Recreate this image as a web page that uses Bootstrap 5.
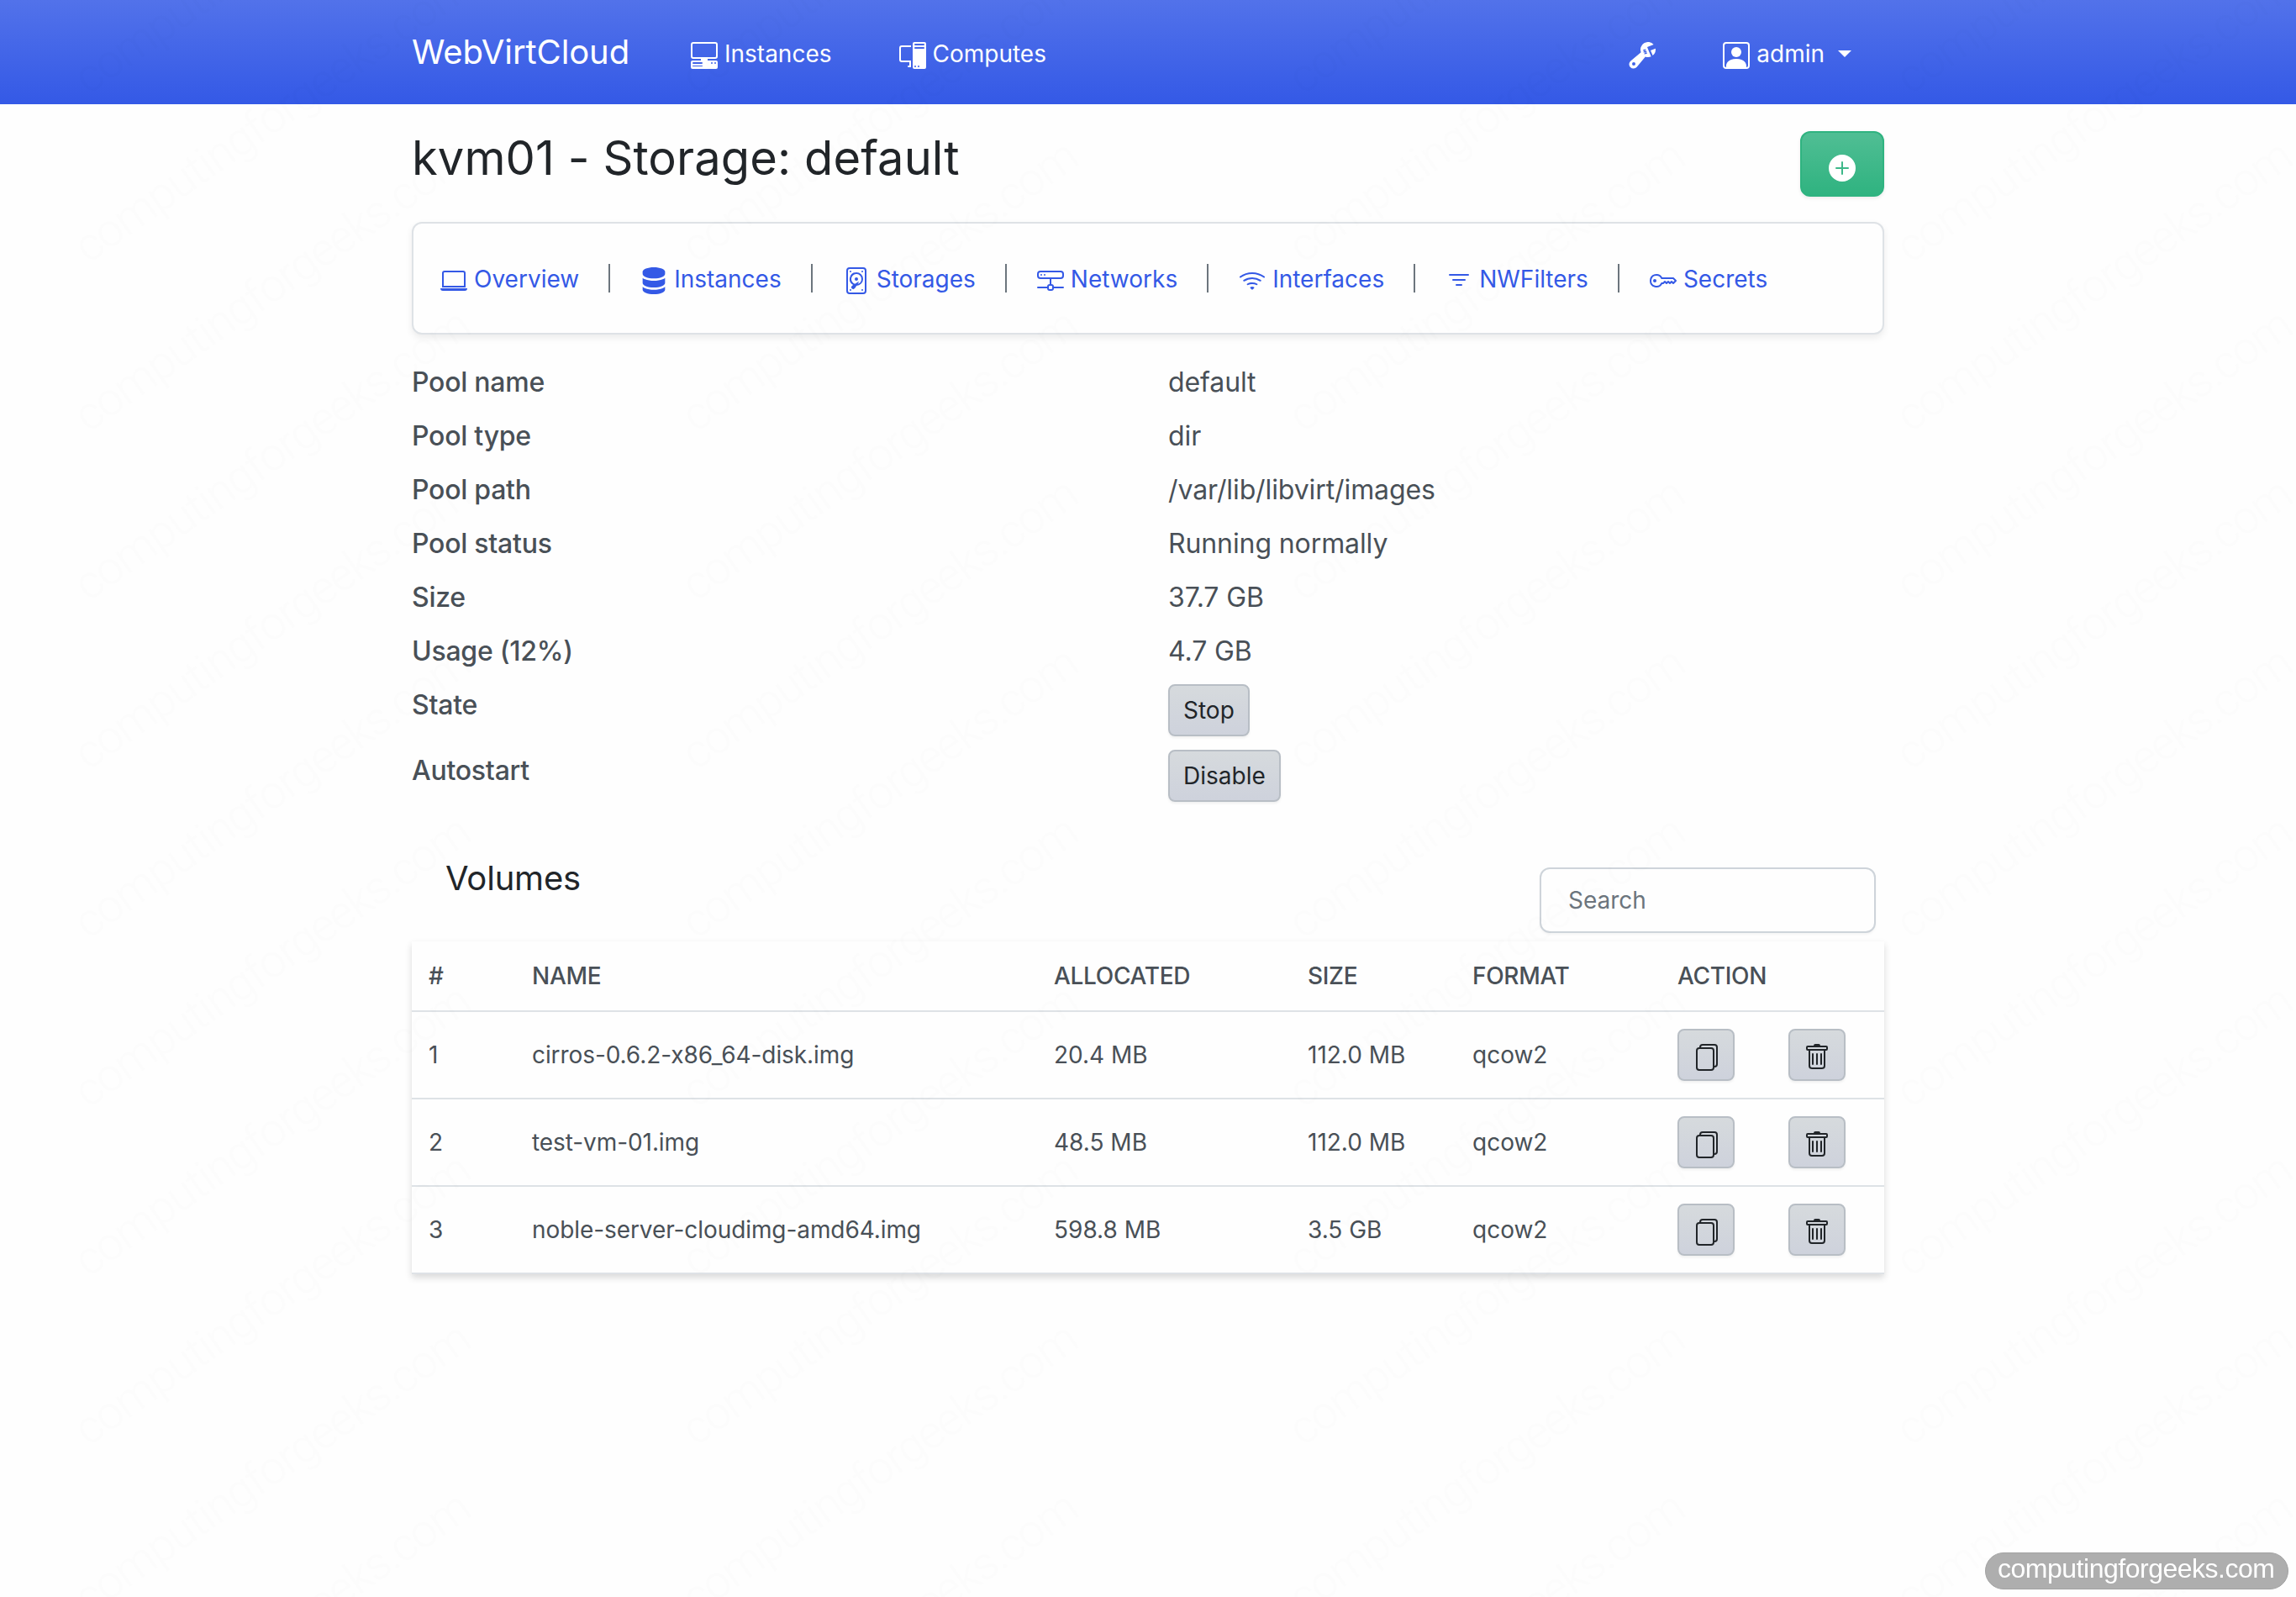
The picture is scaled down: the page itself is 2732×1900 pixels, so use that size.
<!DOCTYPE html>
<html lang="en">
<head>
<meta charset="utf-8">
<meta name="viewport" content="width=device-width, initial-scale=1">
<title>WebVirtCloud - Storage: default</title>
<link href="https://cdn.jsdelivr.net/npm/bootstrap@5.3.0/dist/css/bootstrap.min.css" rel="stylesheet">
<style>
body{font-family:Inter,"Liberation Sans",sans-serif;font-size:28px;line-height:1.5;color:#495057;background:#fefefe;height:1900px;overflow:hidden}
.page-wrap{width:1752px;margin:0 auto;padding:0}
.topbar{height:124px;background:linear-gradient(180deg,#5272ea,#3459e6)}
.topbar a{color:#fff;text-decoration:none;white-space:nowrap}
.topbar .brand{font-size:40px;line-height:60px;margin-top:-1px;width:332px;letter-spacing:-.1px}
.ico{width:32px;height:32px;fill:currentColor;flex:none;display:block}
.navitem{gap:8px;height:43px;margin-top:4px}
.navitem + .navitem{margin-left:80px}
.navitem .ico{margin-top:4px}
.navitem.user{margin-right:39px}
.caret{border-top:8px solid #fff;border-left:8px solid transparent;border-right:8px solid transparent;margin-left:8px}
.title-row{height:140px;padding-top:32px}
.title-row h2{font-size:56px;line-height:64px;font-weight:400;color:#212529;margin:0;letter-spacing:.1px}
.add-btn{width:100px;height:78px;border-radius:12px;border:2px solid #2fb380;background:linear-gradient(180deg,#50be94,#2fb380);color:#fff;padding:0;box-shadow:0 2px 4px rgba(0,0,0,.08)}
.add-btn .ico{margin:10px auto 0}
.tabs-card{height:134px;border:2px solid #dee2e6;border-radius:12px;background:#fefefe;box-shadow:0 4px 8px rgba(0,0,0,.075);padding-left:32px}
.tabs-card a{color:#3459e6;text-decoration:none;display:flex;align-items:center;gap:8px;white-space:nowrap;height:43px;padding-top:1px}
.tabs-card .ico{margin-top:5px}
.tabs-card .sep{width:2px;height:34px;background:#6c757d;margin:0 36px 0 35px}
.pool{padding-top:24px;font-size:32px;line-height:48px}
.pool dl{margin:0}
.pool .prow{padding:8px 0}
.pool dt{width:900px;font-weight:500;letter-spacing:-.25px}
.pool dd{margin:0}
.pool dt,.pool .txt{height:48px;padding-top:1px}
.pool .txt{letter-spacing:-.1px}
.grey-btn{display:flex;align-items:center;justify-content:center;height:62px;border:2px solid #b8bec5;border-radius:8px;background:linear-gradient(180deg,#d6dadd,#ced2dc);color:#212529;font-size:28px;line-height:40px;padding:0 16px;box-shadow:0 2px 3px rgba(0,0,0,.06)}
.grey-btn .ico{margin-top:6px}
.vol-head{height:158px;padding:53px 10px 0 40px}
.vol-head h3{font-size:40px;line-height:60px;font-weight:400;color:#212529;margin:0;letter-spacing:-.2px}
.search-box{width:400px;height:78px;margin-top:17px;border:2px solid #ced4da;border-radius:12px;padding:0 32px;font-size:28px;color:#6c757d;box-shadow:0 2px 3px rgba(0,0,0,.04);background:#fefefe}
.search-box::placeholder{color:#6c757d;opacity:1}
.vol-table{width:1752px;table-layout:fixed;margin:0;background:#fefefe;box-shadow:0 4px 8px rgba(0,0,0,.15);border-collapse:separate;border-spacing:0}
.vol-table th,.vol-table td{padding:0 20px;border-bottom:2px solid #dee2e6;vertical-align:middle;white-space:nowrap}
.vol-table th{height:84px;font-weight:500;letter-spacing:-.3px}
.vol-table td{height:104px}
.vol-table td:nth-child(2){letter-spacing:-.08px}
.wm{position:fixed;inset:0;pointer-events:none}
.site-tag{position:absolute;left:2362px;top:1847px;width:361px;height:44px;border-radius:22px;background:#aeaeae;border:1px solid #a2a2a2}
.site-tag text{font-family:"Liberation Sans",sans-serif;font-size:32px;fill:#fff}
</style>
<script src="https://cdn.jsdelivr.net/npm/bootstrap@5.3.0/dist/js/bootstrap.bundle.min.js"></script>
</head>
<body>
<svg width="0" height="0" class="position-absolute" aria-hidden="true">
<symbol id="i-pch" viewBox="0 0 16 16"><path d="M1.5 0A1.5 1.5 0 0 0 0 1.5v7A1.5 1.5 0 0 0 1.5 10H6v1H1a1 1 0 0 0-1 1v3a1 1 0 0 0 1 1h14a1 1 0 0 0 1-1v-3a1 1 0 0 0-1-1h-5v-1h4.5A1.5 1.5 0 0 0 16 8.5v-7A1.5 1.5 0 0 0 14.5 0h-13Zm0 1h13a.5.5 0 0 1 .5.5v7a.5.5 0 0 1-.5.5h-13a.5.5 0 0 1-.5-.5v-7a.5.5 0 0 1 .5-.5ZM12 12.5a.5.5 0 1 1 1 0 .5.5 0 0 1-1 0Zm2 0a.5.5 0 1 1 1 0 .5.5 0 0 1-1 0ZM1.5 12h5a.5.5 0 0 1 0 1h-5a.5.5 0 0 1 0-1ZM1 14.25a.25.25 0 0 1 .25-.25h5.5a.25.25 0 1 1 0 .5h-5.5a.25.25 0 0 1-.25-.25Z"/></symbol>
<symbol id="i-pc" viewBox="0 0 16 16"><path d="M8 1a1 1 0 0 1 1-1h6a1 1 0 0 1 1 1v14a1 1 0 0 1-1 1H9a1 1 0 0 1-1-1V1Zm1 13.5a.5.5 0 1 0 1 0 .5.5 0 0 0-1 0Zm2 0a.5.5 0 1 0 1 0 .5.5 0 0 0-1 0ZM9.5 1a.5.5 0 0 0 0 1h5a.5.5 0 0 0 0-1h-5ZM9 3.5a.5.5 0 0 0 .5.5h5a.5.5 0 0 0 0-1h-5a.5.5 0 0 0-.5.5ZM1.5 2A1.5 1.5 0 0 0 0 3.5v7A1.5 1.5 0 0 0 1.5 12H6v2h-.5a.5.5 0 0 0 0 1H7v-4H1.5a.5.5 0 0 1-.5-.5v-7a.5.5 0 0 1 .5-.5H7V2H1.5Z"/></symbol>
<symbol id="i-wrench" viewBox="0 0 16 16"><path d="M16 4.5a4.492 4.492 0 0 1-1.703 3.526L13 5l2.959-1.11c.027.2.041.403.041.61Z"/><path d="M11.5 9c.653 0 1.273-.139 1.833-.39L12 5.5 11 3l3.826-1.53A4.5 4.5 0 0 0 7.29 6.092l-6.116 5.096a2.583 2.583 0 1 0 3.638 3.638L9.908 8.71A4.49 4.49 0 0 0 11.5 9Zm-1.292-4.361-.596.893.809-.27a.25.25 0 0 1 .287.377l-.596.893.809-.27.158.475-1.5.5a.25.25 0 0 1-.287-.376l.596-.893-.809.27a.25.25 0 0 1-.287-.377l.596-.893-.809.27-.158-.475 1.5-.5a.25.25 0 0 1 .287.376ZM3 14a1 1 0 1 1 0-2 1 1 0 0 1 0 2Z"/></symbol>
<symbol id="i-person" viewBox="0 0 16 16"><path d="M11 6a3 3 0 1 1-6 0 3 3 0 0 1 6 0z"/><path d="M2 0a2 2 0 0 0-2 2v12a2 2 0 0 0 2 2h12a2 2 0 0 0 2-2V2a2 2 0 0 0-2-2H2zm12 1a1 1 0 0 1 1 1v12a1 1 0 0 1-1 1v-1c0-1-1-4-6-4s-6 3-6 4v1a1 1 0 0 1-1-1V2a1 1 0 0 1 1-1h12z"/></symbol>
<symbol id="i-plus" viewBox="0 0 16 16"><path d="M16 8A8 8 0 1 1 0 8a8 8 0 0 1 16 0zM8.5 4.5a.5.5 0 0 0-1 0v3h-3a.5.5 0 0 0 0 1h3v3a.5.5 0 0 0 1 0v-3h3a.5.5 0 0 0 0-1h-3v-3z"/></symbol>
<symbol id="i-laptop" viewBox="0 0 16 16"><path d="M13.5 3a.5.5 0 0 1 .5.5V11H2V3.5a.5.5 0 0 1 .5-.5h11zm-11-1A1.5 1.5 0 0 0 1 3.5V12h14V3.5A1.5 1.5 0 0 0 13.5 2h-11zM0 12.5h16a1.5 1.5 0 0 1-1.5 1.5h-13A1.5 1.5 0 0 1 0 12.5z"/></symbol>
<symbol id="i-server" viewBox="0 0 16 16"><path d="M1.333 2.667C1.333 1.194 4.318 0 8 0s6.667 1.194 6.667 2.667V4c0 1.473-2.985 2.667-6.667 2.667S1.333 5.473 1.333 4V2.667z"/><path d="M1.333 6.334v3C1.333 10.805 4.318 12 8 12s6.667-1.194 6.667-2.667V6.334a6.51 6.51 0 0 1-1.458.79C11.81 7.684 9.967 8 8 8c-1.966 0-3.809-.317-5.208-.876a6.508 6.508 0 0 1-1.458-.79z"/><path d="M14.667 11.668a6.51 6.51 0 0 1-1.458.789c-1.4.56-3.242.876-5.21.876-1.966 0-3.809-.316-5.208-.876a6.51 6.51 0 0 1-1.458-.79v1.666C1.333 14.806 4.318 16 8 16s6.667-1.194 6.667-2.667v-1.665z"/></symbol>
<symbol id="i-hdd" viewBox="0 0 16 16"><path d="M12 2.5a.5.5 0 1 1-1 0 .5.5 0 0 1 1 0Zm0 11a.5.5 0 1 1-1 0 .5.5 0 0 1 1 0Zm-7.5.5a.5.5 0 1 0 0-1 .5.5 0 0 0 0 1ZM5 2.5a.5.5 0 1 1-1 0 .5.5 0 0 1 1 0ZM8 8a1 1 0 1 0 0-2 1 1 0 0 0 0 2Z"/><path d="M12 7a4 4 0 0 1-3.937 4c-.537.813-1.02 1.515-1.181 1.677a1.102 1.102 0 0 1-1.56-1.559c.1-.098.396-.314.795-.588A4 4 0 0 1 8 3a4 4 0 0 1 4 4Zm-1 0a3 3 0 1 0-3.891 2.865c.667-.44 1.396-.91 1.955-1.268.224-.144.483.115.34.34l-.62.96A3.001 3.001 0 0 0 11 7Z"/><path d="M2 2a2 2 0 0 1 2-2h8a2 2 0 0 1 2 2v12a2 2 0 0 1-2 2H4a2 2 0 0 1-2-2V2Zm2-1a1 1 0 0 0-1 1v12a1 1 0 0 0 1 1h8a1 1 0 0 0 1-1V2a1 1 0 0 0-1-1H4Z"/></symbol>
<symbol id="i-net" viewBox="0 0 16 16"><path d="M4.5 5a.5.5 0 1 0 0-1 .5.5 0 0 0 0 1zM3 4.5a.5.5 0 1 1-1 0 .5.5 0 0 1 1 0z"/><path d="M0 4a2 2 0 0 1 2-2h12a2 2 0 0 1 2 2v1a2 2 0 0 1-2 2H8.5v3a1.5 1.5 0 0 1 1.5 1.5h5.5a.5.5 0 0 1 0 1H10A1.5 1.5 0 0 1 8.5 14h-1A1.5 1.5 0 0 1 6 12.5H.5a.5.5 0 0 1 0-1H6A1.5 1.5 0 0 1 7.5 10V7H2a2 2 0 0 1-2-2V4zm1 0v1a1 1 0 0 0 1 1h12a1 1 0 0 0 1-1V4a1 1 0 0 0-1-1H2a1 1 0 0 0-1 1zm6 7.5v1a.5.5 0 0 0 .5.5h1a.5.5 0 0 0 .5-.5v-1a.5.5 0 0 0-.5-.5h-1a.5.5 0 0 0-.5.5z"/></symbol>
<symbol id="i-wifi" viewBox="0 0 16 16"><path d="M15.384 6.115a.485.485 0 0 0-.047-.736A12.444 12.444 0 0 0 8 3C5.259 3 2.723 3.882.663 5.379a.485.485 0 0 0-.048.736.518.518 0 0 0 .668.05A11.448 11.448 0 0 1 8 4c2.507 0 4.827.802 6.716 2.164.205.148.49.13.668-.049z"/><path d="M13.229 8.271a.482.482 0 0 0-.063-.745A9.455 9.455 0 0 0 8 6c-1.905 0-3.68.56-5.166 1.526a.48.48 0 0 0-.063.745.525.525 0 0 0 .652.065A8.46 8.46 0 0 1 8 7a8.46 8.46 0 0 1 4.576 1.336c.206.132.48.108.653-.065zm-2.183 2.183c.226-.226.185-.605-.1-.75A6.473 6.473 0 0 0 8 9c-1.06 0-2.062.254-2.946.704-.285.145-.326.524-.1.75l.015.015c.16.16.407.19.611.09A5.478 5.478 0 0 1 8 10c.868 0 1.69.201 2.42.56.203.1.45.07.61-.091l.016-.015zM9.06 12.44c.196-.196.198-.52-.04-.66A1.99 1.99 0 0 0 8 11.5a1.99 1.99 0 0 0-1.02.28c-.238.14-.236.464-.04.66l.706.706a.5.5 0 0 0 .707 0l.707-.707z"/></symbol>
<symbol id="i-filter" viewBox="0 0 16 16"><path d="M6 10.5a.5.5 0 0 1 .5-.5h3a.5.5 0 0 1 0 1h-3a.5.5 0 0 1-.5-.5zm-2-3a.5.5 0 0 1 .5-.5h7a.5.5 0 0 1 0 1h-7a.5.5 0 0 1-.5-.5zm-2-3a.5.5 0 0 1 .5-.5h11a.5.5 0 0 1 0 1h-11a.5.5 0 0 1-.5-.5z"/></symbol>
<symbol id="i-key" viewBox="0 0 16 16"><path d="M0 8a4 4 0 0 1 7.465-2H14a.5.5 0 0 1 .354.146l1.5 1.5a.5.5 0 0 1 0 .708l-1.5 1.5a.5.5 0 0 1-.708 0L13 9.207l-.646.647a.5.5 0 0 1-.708 0L11 9.207l-.646.647a.5.5 0 0 1-.708 0L9 9.207l-.646.647A.5.5 0 0 1 8 10h-.535A4 4 0 0 1 0 8zm4-3a3 3 0 1 0 2.712 4.285A.5.5 0 0 1 7.163 9h.63l.853-.854a.5.5 0 0 1 .708 0l.646.647.646-.647a.5.5 0 0 1 .708 0l.646.647.646-.647a.5.5 0 0 1 .708 0l.646.647.793-.793-1-1h-6.63a.5.5 0 0 1-.451-.285A3 3 0 0 0 4 5z"/><path d="M4 8a1 1 0 1 1-2 0 1 1 0 0 1 2 0z"/></symbol>
<symbol id="i-files" viewBox="0 0 16 16"><path d="M13 0H6a2 2 0 0 0-2 2 2 2 0 0 0-2 2v10a2 2 0 0 0 2 2h7a2 2 0 0 0 2-2 2 2 0 0 0 2-2V2a2 2 0 0 0-2-2zm0 13V4a2 2 0 0 0-2-2H5a1 1 0 0 1 1-1h7a1 1 0 0 1 1 1v10a1 1 0 0 1-1 1zM3 4a1 1 0 0 1 1-1h7a1 1 0 0 1 1 1v10a1 1 0 0 1-1 1H4a1 1 0 0 1-1-1V4z"/></symbol>
<symbol id="i-trash" viewBox="0 0 16 16"><path d="M5.5 5.5A.5.5 0 0 1 6 6v6a.5.5 0 0 1-1 0V6a.5.5 0 0 1 .5-.5Zm2.5 0a.5.5 0 0 1 .5.5v6a.5.5 0 0 1-1 0V6a.5.5 0 0 1 .5-.5Zm3 .5a.5.5 0 0 0-1 0v6a.5.5 0 0 0 1 0V6Z"/><path d="M14.5 3a1 1 0 0 1-1 1H13v9a2 2 0 0 1-2 2H5a2 2 0 0 1-2-2V4h-.5a1 1 0 0 1-1-1V2a1 1 0 0 1 1-1H6a1 1 0 0 1 1-1h2a1 1 0 0 1 1 1h3.5a1 1 0 0 1 1 1v1ZM4.118 4 4 4.059V13a1 1 0 0 0 1 1h6a1 1 0 0 0 1-1V4.059L11.882 4H4.118ZM2.5 3h11V2h-11v1Z"/></symbol>
</svg>

<nav class="topbar">
  <div class="page-wrap h-100 d-flex align-items-center">
    <a class="brand" href="#">WebVirtCloud</a>
    <a class="navitem d-flex align-items-center" href="#"><svg class="ico"><use href="#i-pch"/></svg>Instances</a>
    <a class="navitem d-flex align-items-center" href="#"><svg class="ico"><use href="#i-pc"/></svg>Computes</a>
    <a class="navitem d-flex align-items-center ms-auto" href="#" aria-label="Settings"><svg class="ico"><use href="#i-wrench"/></svg></a>
    <a class="navitem user d-flex align-items-center" href="#"><svg class="ico"><use href="#i-person"/></svg>admin <span class="caret"></span></a>
  </div>
</nav>

<main class="page-wrap">
  <div class="title-row d-flex justify-content-between align-items-start">
    <h2>kvm01 - Storage: default</h2>
    <button class="add-btn" type="button" aria-label="Add volume"><svg class="ico"><use href="#i-plus"/></svg></button>
  </div>

  <div class="tabs-card d-flex align-items-center">
    <a href="#"><svg class="ico"><use href="#i-laptop"/></svg>Overview</a><span class="sep"></span>
    <a href="#"><svg class="ico"><use href="#i-server"/></svg>Instances</a><span class="sep"></span>
    <a href="#"><svg class="ico"><use href="#i-hdd"/></svg>Storages</a><span class="sep"></span>
    <a href="#"><svg class="ico"><use href="#i-net"/></svg>Networks</a><span class="sep"></span>
    <a href="#"><svg class="ico"><use href="#i-wifi"/></svg>Interfaces</a><span class="sep"></span>
    <a href="#"><svg class="ico"><use href="#i-filter"/></svg>NWFilters</a><span class="sep"></span>
    <a href="#"><svg class="ico"><use href="#i-key"/></svg>Secrets</a>
  </div>

  <section class="pool">
    <dl>
      <div class="prow d-flex"><dt>Pool name</dt><dd class="txt">default</dd></div>
      <div class="prow d-flex"><dt>Pool type</dt><dd class="txt">dir</dd></div>
      <div class="prow d-flex"><dt>Pool path</dt><dd class="txt">/var/lib/libvirt/images</dd></div>
      <div class="prow d-flex"><dt>Pool status</dt><dd class="txt">Running normally</dd></div>
      <div class="prow d-flex"><dt>Size</dt><dd class="txt">37.7 GB</dd></div>
      <div class="prow d-flex"><dt>Usage (12%)</dt><dd class="txt">4.7 GB</dd></div>
      <div class="prow d-flex"><dt>State</dt><dd><button class="grey-btn" type="button">Stop</button></dd></div>
      <div class="prow d-flex"><dt>Autostart</dt><dd><button class="grey-btn" type="button">Disable</button></dd></div>
    </dl>
  </section>

  <div class="vol-head d-flex justify-content-between align-items-start">
    <h3>Volumes</h3>
    <input class="search-box" type="text" placeholder="Search">
  </div>
  <table class="vol-table">
    <colgroup><col style="width:123px"><col style="width:621px"><col style="width:302px"><col style="width:196px"><col style="width:244px"><col style="width:132px"><col style="width:134px"></colgroup>
    <thead><tr><th>#</th><th>NAME</th><th>ALLOCATED</th><th>SIZE</th><th>FORMAT</th><th colspan="2">ACTION</th></tr></thead>
    <tbody>
      <tr><td>1</td><td>cirros-0.6.2-x86_64-disk.img</td><td>20.4 MB</td><td>112.0 MB</td><td>qcow2</td><td><button class="grey-btn" aria-label="Clone"><svg class="ico"><use href="#i-files"/></svg></button></td><td><button class="grey-btn" aria-label="Delete"><svg class="ico"><use href="#i-trash"/></svg></button></td></tr>
      <tr><td>2</td><td>test-vm-01.img</td><td>48.5 MB</td><td>112.0 MB</td><td>qcow2</td><td><button class="grey-btn" aria-label="Clone"><svg class="ico"><use href="#i-files"/></svg></button></td><td><button class="grey-btn" aria-label="Delete"><svg class="ico"><use href="#i-trash"/></svg></button></td></tr>
      <tr><td>3</td><td>noble-server-cloudimg-amd64.img</td><td>598.8 MB</td><td>3.5 GB</td><td>qcow2</td><td><button class="grey-btn" aria-label="Clone"><svg class="ico"><use href="#i-files"/></svg></button></td><td><button class="grey-btn" aria-label="Delete"><svg class="ico"><use href="#i-trash"/></svg></button></td></tr>
    </tbody>
  </table>
</main>

<!-- diagonal site mark repeated over the whole page -->
<svg class="wm" width="2732" height="1900" aria-hidden="true">
  <defs>
    <pattern id="mark-tile" patternUnits="userSpaceOnUse" x="800" y="0" width="722.5" height="201">
      <g font-family="Roboto, sans-serif" font-weight="300" font-size="54" fill="#000" fill-opacity=".008">
        <text transform="translate(28 113) rotate(-35)" textLength="560">computingforgeeks.com</text>
        <text transform="translate(28 314) rotate(-35)" textLength="560">computingforgeeks.com</text>
        <text transform="translate(28 515) rotate(-35)" textLength="560">computingforgeeks.com</text>
      </g>
    </pattern>
  </defs>
  <rect width="2732" height="1900" fill="url(#mark-tile)"/>
</svg>
<div class="site-tag"><svg width="359" height="42" class="d-block"><text x="14" y="29" textLength="330">computingforgeeks.com</text></svg></div>
</body>
</html>
